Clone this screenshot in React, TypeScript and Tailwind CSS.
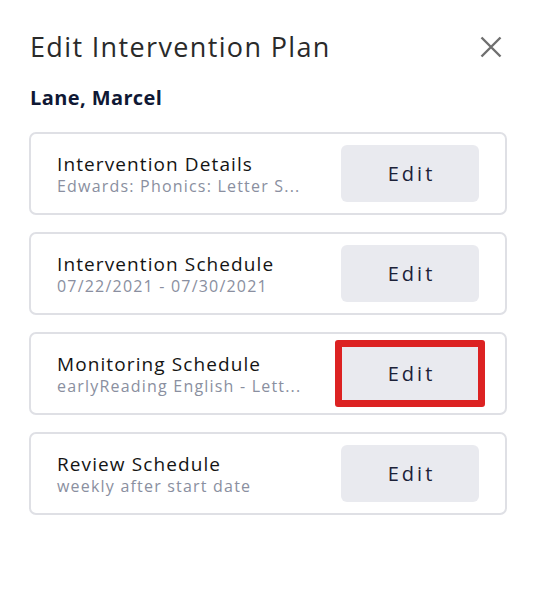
import React from "react";

const rows = [
  { title: "Intervention Details", sub: "Edwards: Phonics: Letter S...", hl: false },
  { title: "Intervention Schedule", sub: "07/22/2021 - 07/30/2021", hl: false },
  { title: "Monitoring Schedule", sub: "earlyReading English - Lett...", hl: true },
  { title: "Review Schedule", sub: "weekly after start date", hl: false },
];

export default function App() {
  return (
    <div
      className="w-[542px] h-[590px] bg-white pl-[29px] pt-[29px]"
      style={{ fontFamily: "'Open Sans', sans-serif" }}
    >
      <div className="w-[478px] flex items-center justify-between">
        <h1 className="text-[27px] leading-[36px] text-[#2a2a2a] tracking-[1.35px] pl-[1px]">
          Edit Intervention Plan
        </h1>
        <button className="mr-[5px] text-[#6f6f6f]" aria-label="Close">
          <svg width="22" height="22" viewBox="0 0 22 22" fill="none" stroke="currentColor" strokeWidth="2.4">
            <path d="M1.5 1.5 L20.5 20.5 M20.5 1.5 L1.5 20.5" />
          </svg>
        </button>
      </div>
      <div className="mt-[21px] text-[20px] leading-[24px] font-bold text-[#0f1834] tracking-[0.4px] pl-[1px]">
        Lane, Marcel
      </div>
      <div className="mt-[22px] w-[478px] flex flex-col gap-[17px]">
        {rows.map((r) => (
          <div
            key={r.title}
            className="h-[83px] border-2 border-[#dfe0e5] rounded-[7px] flex items-center justify-between pl-[26px] pr-[26px]"
          >
            <div className="flex flex-col">
              <span className="text-[19px] leading-[24px] text-[#141414] tracking-[1.1px]">{r.title}</span>
              <span className="text-[16px] leading-[20px] text-[#8a8fa0] tracking-[1.2px]">{r.sub}</span>
            </div>
            <div className="relative">
              <button className="w-[138px] h-[57px] rounded-[6px] bg-[#e9eaef] text-[20px] tracking-[3px] pl-[3px] text-[#1c2238]">
                Edit
              </button>
              {r.hl && (
                <div className="absolute -left-[6px] -right-[6px] -top-[5px] -bottom-[5px] border-[7px] border-[#dc2222] rounded-[3px]" />
              )}
            </div>
          </div>
        ))}
      </div>
    </div>
  );
}
